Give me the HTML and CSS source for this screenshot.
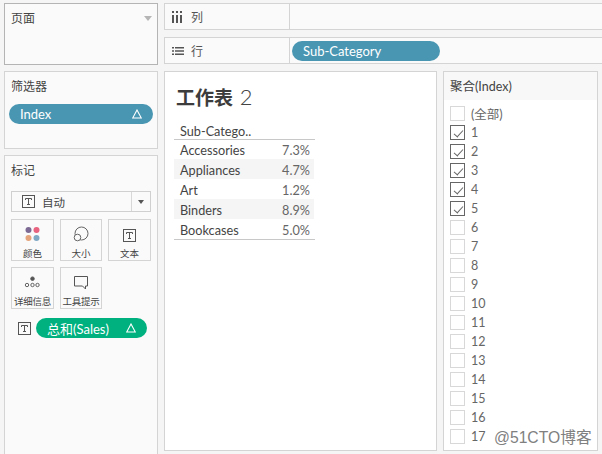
FILE: index.html
```html
<!DOCTYPE html>
<html lang="zh">
<head>
<meta charset="utf-8">
<title>工作表 2</title>
<link rel="stylesheet" href="styles.css">
</head>
<body>
<div class="app">
  <aside class="side">
    <section class="panel pages">
      <div class="panel-title">页面</div>
      <span class="caret-light"></span>
    </section>
    <section class="panel filters">
      <div class="panel-title">筛选器</div>
      <div class="pill blue wide"><span>Index</span><svg class="delta" viewBox="0 0 10 10"><path d="M5 1 9.300 9H.7z"/></svg></div>
    </section>
    <section class="panel marks">
      <div class="panel-title">标记</div>
      <div class="mark-select">
        <svg class="t-icon" viewBox="0 0 13 13"><use href="#t"/></svg>
        <span class="select-text">自动</span>
        <span class="select-arrow"><i></i></span>
      </div>
      <div class="cards">
        <div class="card">
          <svg class="card-icon" viewBox="0 0 24 24"><circle cx="7.500" cy="4" r="3" fill="#7d6a94"/><circle cx="15.500" cy="4" r="3" fill="#e8637f"/><circle cx="7.500" cy="12" r="3" fill="#e5a47c"/><circle cx="15.500" cy="12" r="3" fill="#7fa9c4"/></svg>
          <span>颜色</span>
        </div>
        <div class="card">
          <svg class="card-icon" viewBox="0 0 24 24" fill="none" stroke="#666" stroke-width="1"><circle cx="12.500" cy="7.500" r="6.500"/><circle cx="8.500" cy="11.500" r="3.300" fill="#fafafa"/></svg>
          <span>大小</span>
        </div>
        <div class="card">
          <svg class="card-icon" viewBox="0 0 24 24"><g transform="translate(5 3)"><rect x=".5" y=".5" width="12" height="12" fill="none" stroke="#555"/><path d="M3.500 3.500h6M6.500 3.500v6M5 9.500h3M3.500 3.500v1.500M9.500 3.500v1.500" fill="none" stroke="#555"/></g></svg>
          <span>文本</span>
        </div>
        <div class="card">
          <svg class="card-icon" viewBox="0 0 24 24" fill="none" stroke="#555" stroke-width=".9"><circle cx="11.500" cy="4.700" r="1.800" fill="#555"/><circle cx="6" cy="11" r="1.700"/><circle cx="11.500" cy="11" r="1.700"/><circle cx="16.500" cy="11" r="1.700"/></svg>
          <span class="tight">详细信息</span>
        </div>
        <div class="card">
          <svg class="card-icon" viewBox="0 0 24 24" fill="none" stroke="#555" stroke-width="1"><path d="M5.500 2.500h13v9.500h-2v3l-3-3h-8z"/></svg>
          <span class="tight">工具提示</span>
        </div>
      </div>
      <div class="mark-field">
        <svg class="t-icon" viewBox="0 0 13 13"><use href="#t"/></svg>
        <div class="pill green"><span>总和(Sales)</span><svg class="delta" viewBox="0 0 10 10"><path d="M5 1 9.300 9H.7z"/></svg></div>
      </div>
    </section>
  </aside>
  <main class="main">
    <div class="shelf">
      <div class="shelf-label">
        <svg class="shelf-icon" viewBox="0 0 12 12"><path d="M0 4h2v8H0zM4 4h2v8H4zM8 4h2v8H8zM0 0h2v2H0zM4 0h2v2H4zM8 0h2v2H8z" fill="#555"/></svg>
        <span>列</span>
      </div>
      <div class="shelf-body"></div>
    </div>
    <div class="shelf">
      <div class="shelf-label">
        <svg class="shelf-icon" viewBox="0 0 12 12"><path d="M0 2h2v1.600H0zM0 5.200h2v1.600H0zM0 8.400h2V10H0zM3 2h9v1.600H3zM3 5.200h9v1.600H3zM3 8.400h9V10H3z" fill="#555"/></svg>
        <span>行</span>
      </div>
      <div class="shelf-body"><div class="pill blue row-pill"><span>Sub-Category</span></div></div>
    </div>
    <div class="content">
      <section class="sheet">
        <h1 class="sheet-title">工作表 <span>2</span></h1>
        <div class="table">
          <div class="thead">Sub-Catego..</div>
          <div class="tr"><span>Accessories</span><span class="val">7.3%</span></div>
          <div class="tr band"><span>Appliances</span><span class="val">4.7%</span></div>
          <div class="tr"><span>Art</span><span class="val">1.2%</span></div>
          <div class="tr band"><span>Binders</span><span class="val">8.9%</span></div>
          <div class="tr"><span>Bookcases</span><span class="val">5.0%</span></div>
        </div>
      </section>
      <section class="filter-card">
        <div class="filter-title">聚合(Index)</div>
        <ul class="checks">
          <li><i class="box"></i>(全部)</li>
          <li><i class="box on"></i>1</li>
          <li><i class="box on"></i>2</li>
          <li><i class="box on"></i>3</li>
          <li><i class="box on"></i>4</li>
          <li><i class="box on"></i>5</li>
          <li><i class="box"></i>6</li>
          <li><i class="box"></i>7</li>
          <li><i class="box"></i>8</li>
          <li><i class="box"></i>9</li>
          <li><i class="box"></i>10</li>
          <li><i class="box"></i>11</li>
          <li><i class="box"></i>12</li>
          <li><i class="box"></i>13</li>
          <li><i class="box"></i>14</li>
          <li><i class="box"></i>15</li>
          <li><i class="box"></i>16</li>
          <li><i class="box"></i>17</li>
        </ul>
      </section>
    </div>
  </main>
  <div class="watermark">@51CTO博客</div>
</div>
<svg class="defs" width="0" height="0"><symbol id="t" viewBox="0 0 13 13"><rect x=".5" y=".5" width="12" height="12" fill="none" stroke="#555"/><path d="M3.500 3.500h6M6.500 3.500v6M5 9.500h3M3.500 3.500v1.500M9.500 3.500v1.500" fill="none" stroke="#555"/></symbol></svg>
</body>
</html>
```
FILE: styles.css
```css
* { box-sizing: border-box; }
html, body { margin: 0; height: 100%; }
body {
  width: 602px; height: 454px; overflow: hidden; background: #f5f5f5;
  font-family: Lato, "Noto Sans CJK SC", sans-serif; font-size: 13px; color: #444;
}
.app { position: relative; display: flex; gap: 6px; height: 454px; padding: 3px 0 0 4px; }
.side { width: 154px; display: flex; flex-direction: column; gap: 6px; flex: none; }
.panel { position: relative; background: #fafafa; border: 1px solid #d4d4d4; padding: 7px 6px 0; }
.panel-title { font-size: 12px; line-height: 16px; color: #444; }
.pages { height: 62px; border: 1px solid #b4b4b4; }
.caret-light { position: absolute; right: 5px; top: 12px; border: 4px solid transparent; border-top: 5px solid #b5b5b5; border-bottom: 0; }
.filters { height: 78px; }
.filters .pill { margin: 9px 0 0 -2px; width: 144px; }
.marks { flex: 1; margin-bottom: -20px; }
.pill { display: flex; align-items: center; justify-content: space-between; height: 20px; border-radius: 10px; color: #fff; font-size: 13px; padding: 0 11px; }
.blue { background: #4996b2; }
.green { background: #00b180; }
.delta { width: 10px; height: 10px; flex: none; fill: none; stroke: #fff; stroke-width: 1.100; }
.mark-select { display: flex; align-items: center; height: 21px; margin-top: 12px; width: 140px; border: 1px solid #d0d0d0; background: #fafafa; padding-left: 10px; }
.t-icon { width: 13px; height: 13px; flex: none; }
.select-text { margin-left: 7px; font-size: 11.500px; flex: 1; }
.select-arrow { width: 19px; height: 100%; border-left: 1px solid #d8d8d8; display: flex; align-items: center; justify-content: center; }
.select-arrow i { border: 3.500px solid transparent; border-top: 4px solid #555; border-bottom: 0; }
.cards { display: grid; grid-template-columns: 43px 42px 43px; gap: 6px; margin-top: 7px; width: 140px; }
.card { height: 42px; border: 1px solid #d4d4d4; background: #fafafa; display: flex; flex-direction: column; align-items: center; font-size: 9.500px; line-height: 14px; color: #444; white-space: nowrap; }
.card-icon { width: 24px; height: 24px; margin-top: 6px; margin-bottom: -3px; flex: none; }
.card .tight { font-size: 9.500px; letter-spacing: -.2px; }
.mark-field { display: flex; align-items: center; margin-top: 9px; padding-left: 7px; gap: 5px; }
.mark-field .pill { width: 111px; }
.main { width: 438px; flex: none; display: flex; flex-direction: column; gap: 7px; }
.shelf { display: flex; height: 27px; flex: none; background: #fafafa; border: 1px solid #d4d4d4; border-right: 0; }
.shelf-label { width: 125px; flex: none; display: flex; align-items: center; gap: 7px; padding-left: 7px; border-right: 1px solid #d4d4d4; font-size: 12px; color: #555; }
.shelf-icon { width: 12px; height: 12px; }
.shelf-body { flex: 1; display: flex; align-items: center; padding-left: 2px; }
.row-pill { width: 148px; justify-content: flex-start; }
.content { display: flex; gap: 6px; height: 380px; flex: none; }
.sheet { width: 273px; flex: none; background: #fff; border: 1px solid #d4d4d4; padding: 12px 0 0 9px; }
.sheet-title { margin: 0; font-size: 19px; font-weight: 700; line-height: 26px; color: #3c3c3c; padding-left: 2px; }
.sheet-title span { font-family: Lato, sans-serif; font-size: 22px; font-weight: 300; color: #444; margin-left: 2px; }
.table { margin-top: 10px; width: 141px; font-size: 12.700px; color: #444; border-bottom: 1px solid #c8c8c8; }
.thead { height: 19px; line-height: 20px; margin-bottom: -1px; padding-left: 6px; border-bottom: 1px solid #c8c8c8; }
.tr { height: 20px; display: flex; justify-content: space-between; align-items: center; padding: 1px 5px 0 6px; }
.band { background: #f5f5f5; margin-right: 1px; padding-right: 4px; }
.val { color: #666; }
.filter-card { width: 155px; flex: none; background: #fff; border: 1px solid #d4d4d4; }
.filter-title { height: 28px; line-height: 30px; background: #f8f8f8; padding-left: 6px; font-size: 12.500px; color: #444; }
.checks { list-style: none; margin: 4px 0 0; padding: 0 0 0 6px; }
.checks li { display: flex; align-items: center; height: 19px; gap: 6px; font-size: 12.500px; color: #666; }
.box { position: relative; width: 15px; height: 15px; flex: none; background: #fff; border: 1px solid #d8d8d8; }
.box.on { border-color: #666; }
.box.on::after { content: ""; position: absolute; left: 4.500px; top: 1.500px; width: 4px; height: 8px; border: solid #666; border-width: 0 1.600px 1.600px 0; transform: rotate(42deg); }
.watermark { position: absolute; left: 494px; top: 428px; font-family: "Liberation Sans", "Noto Sans CJK SC", sans-serif; font-size: 15.700px; line-height: 20px; color: #808080; text-shadow: 0 0 2px #fff; white-space: nowrap; }
.defs { position: absolute; }
```
